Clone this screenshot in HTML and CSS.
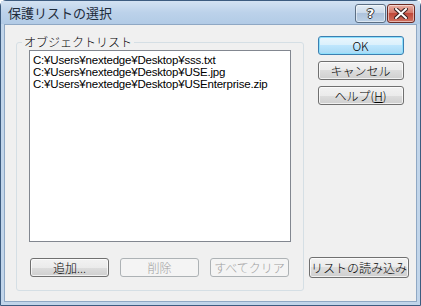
FILE: index.html
```html
<!DOCTYPE html>
<html>
<head>
    <title>保護リストの選択</title>
    <link rel="stylesheet" href="styles.css">
</head>
<body>
    <div class="window">
        <div class="titlebar">
            <span class="title">保護リストの選択</span>
            <div class="caption-btns">
                <span class="cap help">?</span>
                <span class="cap close">
                    <svg width="14" height="11" viewBox="0 0 14 11">
                        <path d="M2 1 L12 10 M12 1 L2 10" stroke="#3a2020" stroke-width="4" stroke-linecap="square"/>
                        <path d="M2 1 L12 10 M12 1 L2 10" stroke="#fff" stroke-width="2" stroke-linecap="square"/>
                    </svg>
                </span>
            </div>
        </div>

        <div class="client">
            <fieldset class="group">
                <legend>オブジェクトリスト</legend>
                <div class="listbox">
                    <div class="item">C:¥Users¥nextedge¥Desktop¥sss.txt</div>
                    <div class="item">C:¥Users¥nextedge¥Desktop¥USE.jpg</div>
                    <div class="item">C:¥Users¥nextedge¥Desktop¥USEnterprise.zip</div>
                </div>
                <div class="row">
                    <button class="btn">追加...</button>
                    <button class="btn" disabled>削除</button>
                    <button class="btn" disabled>すべてクリア</button>
                </div>
            </fieldset>

            <div class="side">
                <div class="side-top">
                    <button class="btn wide default">OK</button>
                    <button class="btn wide">キャンセル</button>
                    <button class="btn wide">ヘルプ(<u>H</u>)</button>
                </div>
                <button class="btn load">リストの読み込み</button>
            </div>
        </div>
    </div>
</body>
</html>
```

FILE: styles.css
```css
body {
    margin: 0;
    font-family: "Noto Sans CJK JP", "Liberation Sans", sans-serif;
    font-size: 12px;
    font-weight: 300;
    color: #000;
}

/* 窓枠 */
.window {
    width: 419px;
    height: 304px;
    border: 1px solid #3d5c80;
    border-radius: 6px 6px 0 0;
    background: #c1d5ea;
    display: flex;
    flex-direction: column;
}
.titlebar {
    height: 23px;
    display: flex;
    align-items: center;
    justify-content: space-between;
    padding: 0 5px 0 7px;
    background: linear-gradient(#d3e2f2, #bcd2ea 50%, #b2cbe6);
}
.title {
    font-size: 13px;
    font-weight: normal;
    color: #1e2b3a;
}
.caption-btns {
    display: flex;
    gap: 1px;
    align-self: flex-start;
    margin-top: 3px;
}
.cap {
    height: 17px;
    border: 1px solid #5c6f84;
    border-radius: 3px;
    display: flex;
    align-items: center;
    justify-content: center;
    box-shadow: inset 0 0 0 1px rgba(255,255,255,0.5);
}
.cap.help {
    width: 29px;
    background: linear-gradient(#e4edf6, #cbdaea 45%, #aec3dc 50%, #bcd1e6);
    color: #fff;
    font-family: "DejaVu Sans", sans-serif;
    font-weight: bold;
    font-size: 13px;
    text-shadow: 1px 0 #333, -1px 0 #333, 0 1px #333, 0 -1px #333;
}
.cap.close {
    width: 26px;
    border-color: #6b2a23;
    background: linear-gradient(#e8b0a6, #d5786a 45%, #c0493a 50%, #d0705f);
}

/* クライアント領域 */
.client {
    flex: 1;
    margin: 0 3px 3px;
    background: #f0f0f0;
    border: 1px solid #8fa8c4;
    display: flex;
    padding: 10px 0 0 11px;
}
.group {
    box-sizing: border-box;
    width: 288px;
    height: 256px;
    margin: 0;
    padding: 0 12px;
    border: 1px solid #d5dfe5;
    border-radius: 3px;
    display: flex;
    flex-direction: column;
}
.group legend {
    padding: 0 2px;
    margin-left: -7px;
    line-height: 14px;
}
.listbox {
    box-sizing: border-box;
    height: 192px;
    margin-top: 1px;
    background: #fff;
    border: 1px solid #828790;
    padding: 3px 3px;
    font-family: "Liberation Sans", sans-serif;
    font-size: 11.5px;
    font-weight: normal;
}
.item {
    line-height: 12px;
    letter-spacing: -0.2px;
}
.row {
    display: flex;
    gap: 11px;
    margin-top: 16px;
    padding-left: 1px;
}

/* ボタン */
.btn {
    width: 79px;
    height: 19px;
    padding: 0;
    font-family: "Noto Sans CJK JP", sans-serif;
    font-size: 12px;
    font-weight: 300;
    line-height: 14px;
    color: #000;
    border: 1px solid #707070;
    border-radius: 3px;
    background: linear-gradient(#f2f2f2, #ebebeb 50%, #dddddd 50%, #cfcfcf);
    box-shadow: inset 0 0 0 1px rgba(255,255,255,0.7);
}
.btn:disabled {
    color: #a0a0a0;
    border-color: #adb2b5;
    background: #f4f4f4;
    box-shadow: none;
}
.btn u {
    text-underline-offset: 1px;
}
.side {
    width: 100px;
    margin-left: 5px;
    display: flex;
    flex-direction: column;
    justify-content: space-between;
    align-items: center;
    padding: 1px 0 23px;
}
.side-top {
    display: flex;
    flex-direction: column;
    gap: 6px;
    margin-left: 3px;
}
.btn.wide {
    width: 86px;
}
.btn.default {
    border-color: #3c7fb1;
    background: linear-gradient(#eaf6fd, #d9f0fc 50%, #bee6fd 50%, #a7d9f5);
    box-shadow: inset 0 0 0 1px #8ee0fc;
}
.btn.load {
    width: 100px;
    height: 21px;
}
```
